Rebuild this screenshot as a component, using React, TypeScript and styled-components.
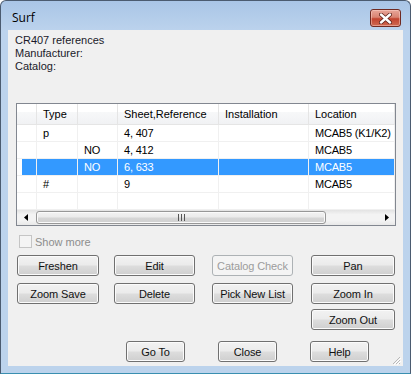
import { FC } from "react";
import styled, { createGlobalStyle } from "styled-components";

const Global = createGlobalStyle`
  html, body {
    margin: 0;
    padding: 0;
    background: #ffffff;
  }
  body {
    font-family: "Liberation Sans", Arial, sans-serif;
    font-size: 11px;
  }
`;

const Window = styled.div`
  box-sizing: border-box;
  width: 411px;
  height: 374px;
  border: 1px solid #4b5b70;
  border-bottom-color: #3a8fb0;
  border-radius: 6px 6px 0 0;
  background: linear-gradient(to bottom, #a9c5e6 0px, #bcd3ed 30px, #bcd3ec 100%);
  padding: 0 7px 7px 7px;
  display: flex;
  flex-direction: column;
`;

const TitleBar = styled.div`
  height: 29px;
  display: flex;
  align-items: flex-start;
  justify-content: space-between;
  padding: 0 2px 0 4px;
`;

const Title = styled.span`
  font-family: "Open Sans", "Noto Sans", sans-serif;
  font-size: 12px;
  color: #000;
  margin-top: 8px;
`;

const CloseBtn = styled.div`
  box-sizing: border-box;
  width: 31px;
  height: 18px;
  margin-top: 8px;
  border: 1px solid #6f2a22;
  border-radius: 3px;
  background: linear-gradient(to bottom, #e8a699 0%, #d98473 45%, #c2432f 55%, #cf6a52 100%);
  box-shadow: inset 0 0 0 1px rgba(255, 220, 210, 0.45);
  display: flex;
  align-items: center;
  justify-content: center;
`;

const Client = styled.div`
  flex: 1;
  position: relative;
  background: #f0f0f0;
  display: flex;
  flex-direction: column;
`;

const Info = styled.div`
  padding: 4px 0 0 7px;
  line-height: 13px;
  color: #1a1a2a;
  height: 69px;
`;

const ListView = styled.div`
  box-sizing: border-box;
  margin-left: 8px;
  width: 380px;
  height: 123px;
  border: 1px solid #828790;
  background: #fff;
  display: flex;
  flex-direction: column;
  overflow: hidden;
`;

const COLS = "20px 41px 40px 101px 90px 86px";

const HeaderRow = styled.div`
  display: grid;
  grid-template-columns: ${COLS};
  height: 23px;
  background: linear-gradient(to bottom, #ffffff 0%, #ffffff 40%, #f7f8f9 41%, #f1f2f4 100%);
  border-bottom: 1px solid #e5e5e5;
`;

const HeaderCell = styled.div`
  border-right: 1px solid #e5e5e5;
  padding-left: 6px;
  display: flex;
  align-items: center;
  color: #000;
  white-space: nowrap;
  overflow: hidden;
`;

const Rows = styled.div`
  flex: 1;
  display: flex;
  flex-direction: column;
`;

const Row = styled.div`
  display: grid;
  grid-template-columns: ${COLS};
  height: 17px;
  flex-shrink: 0;
`;

const Cell = styled.div<{ $sel?: boolean; $first?: boolean }>`
  border-right: 1px solid #f0f0f0;
  border-bottom: 1px solid #f0f0f0;
  padding-left: 6px;
  display: flex;
  align-items: center;
  white-space: nowrap;
  overflow: hidden;
  letter-spacing: -0.2px;
  color: ${(p) => (p.$sel ? "#fff" : "#000")};
  background: ${(p) =>
    p.$sel
      ? p.$first
        ? "linear-gradient(to right, #fff 5px, #3399ff 5px)"
        : "#3399ff"
      : "transparent"};
`;

const ScrollBar = styled.div`
  height: 17px;
  display: flex;
  align-items: stretch;
  background: linear-gradient(to bottom, #e3e3e3, #f3f3f3 30%, #f3f3f3 70%, #e8e8e8);
`;

const ArrowBox = styled.div`
  width: 17px;
  display: flex;
  align-items: center;
  justify-content: center;
`;

const Thumb = styled.div`
  box-sizing: border-box;
  width: 290px;
  margin: 1px 0 1px 2px;
  border: 1px solid #979797;
  border-radius: 3px;
  background: linear-gradient(to bottom, #f2f2f2 0%, #ebebeb 45%, #d6d6d6 55%, #d0d0d0 100%);
  box-shadow: inset 0 0 0 1px #fafafa;
  display: flex;
  align-items: center;
  justify-content: center;
`;

const Track = styled.div`
  flex: 1;
`;

const CheckRow = styled.div`
  display: flex;
  align-items: center;
  gap: 3px;
  margin: 9px 0 0 11px;
  height: 13px;
  color: #8d8d8d;
`;

const CheckBox = styled.div`
  box-sizing: border-box;
  width: 13px;
  height: 13px;
  border: 1px solid #c5c5c5;
  background: #f4f4f4;
`;

const ButtonRow = styled.div<{ $top: number }>`
  display: grid;
  grid-template-columns: 97px 98px 99px 83px;
  margin: ${(p) => p.$top}px 0 0 9px;
`;

const Button = styled.div<{ $w: number; $disabled?: boolean }>`
  box-sizing: border-box;
  width: ${(p) => p.$w}px;
  height: 21px;
  border: 1px solid ${(p) => (p.$disabled ? "#adb2b5" : "#707070")};
  border-radius: 3px;
  background: ${(p) =>
    p.$disabled
      ? "#f4f4f4"
      : "linear-gradient(to bottom, #f2f2f2 0%, #ebebeb 48%, #dddddd 52%, #cfcfcf 100%)"};
  box-shadow: inset 0 0 0 1px ${(p) => (p.$disabled ? "#f4f4f4" : "#fbfbfb")};
  color: ${(p) => (p.$disabled ? "#9c9c9c" : "#111")};
  letter-spacing: -0.1px;
  display: flex;
  align-items: center;
  justify-content: center;
  white-space: nowrap;
`;

const BottomRow = styled.div`
  display: flex;
  gap: 33px;
  margin: 11px 0 0 118px;
`;

const Grip = styled.svg`
  position: absolute;
  right: 2px;
  bottom: 1px;
`;

type R = { cells: string[]; sel?: boolean };

const rows: R[] = [
  { cells: ["", "p", "", "4, 407", "", "MCAB5 (K1/K2)"] },
  { cells: ["", "", "NO", "4, 412", "", "MCAB5"] },
  { cells: ["", "", "NO", "6, 633", "", "MCAB5"], sel: true },
  { cells: ["", "#", "", "9", "", "MCAB5"] },
  { cells: ["", "", "", "", "", ""] },
];

const headers = ["", "Type", "", "Sheet,Reference", "Installation", "Location"];

const App: FC = () => {
  return (
    <>
      <Global />
      <Window>
        <TitleBar>
          <Title>Surf</Title>
          <CloseBtn>
            <svg width="13" height="11" viewBox="0 0 13 11">
              <path
                d="M2 1.5 L11 9.5 M11 1.5 L2 9.5"
                stroke="#5a2018"
                strokeWidth="4"
                strokeLinecap="round"
              />
              <path
                d="M2 1.5 L11 9.5 M11 1.5 L2 9.5"
                stroke="#fff"
                strokeWidth="2.4"
                strokeLinecap="round"
              />
            </svg>
          </CloseBtn>
        </TitleBar>
        <Client>
          <Info>
            <div>CR407 references</div>
            <div>Manufacturer:</div>
            <div>Catalog:</div>
          </Info>
          <ListView>
            <HeaderRow>
              {headers.map((h, i) => (
                <HeaderCell key={i}>{h}</HeaderCell>
              ))}
            </HeaderRow>
            <Rows>
              {rows.map((r, i) => (
                <Row key={i}>
                  {r.cells.map((c, j) => (
                    <Cell key={j} $sel={r.sel} $first={j === 0}>
                      {c}
                    </Cell>
                  ))}
                </Row>
              ))}
            </Rows>
            <ScrollBar>
              <ArrowBox>
                <svg width="4" height="7" viewBox="0 0 4 7">
                  <path d="M4 0 L0 3.5 L4 7 Z" fill="#000" />
                </svg>
              </ArrowBox>
              <Thumb>
                <svg width="7" height="7" viewBox="0 0 7 7">
                  <path d="M0.5 0 V7 M3.5 0 V7 M6.5 0 V7" stroke="#555" strokeWidth="1" />
                </svg>
              </Thumb>
              <Track />
              <ArrowBox>
                <svg width="4" height="7" viewBox="0 0 4 7">
                  <path d="M0 0 L4 3.5 L0 7 Z" fill="#000" />
                </svg>
              </ArrowBox>
            </ScrollBar>
          </ListView>
          <CheckRow>
            <CheckBox />
            <span>Show more</span>
          </CheckRow>
          <ButtonRow $top={7}>
            <Button $w={82}>Freshen</Button>
            <Button $w={81}>Edit</Button>
            <Button $w={81} $disabled>
              Catalog Check
            </Button>
            <Button $w={84}>Pan</Button>
          </ButtonRow>
          <ButtonRow $top={7}>
            <Button $w={82}>Zoom Save</Button>
            <Button $w={81}>Delete</Button>
            <Button $w={81}>Pick New List</Button>
            <Button $w={84}>Zoom In</Button>
          </ButtonRow>
          <ButtonRow $top={5}>
            <span />
            <span />
            <span />
            <Button $w={84}>Zoom Out</Button>
          </ButtonRow>
          <BottomRow>
            <Button $w={59}>Go To</Button>
            <Button $w={59}>Close</Button>
            <Button $w={59}>Help</Button>
          </BottomRow>
          <Grip width="10" height="10" viewBox="0 0 10 10">
            <path
              d="M9 2 L2 9 M9 5 L5 9 M9 8 L8 9"
              stroke="#b8b8b8"
              strokeWidth="1"
            />
            <path
              d="M10 3 L3 10 M10 6 L6 10"
              stroke="#ffffff"
              strokeWidth="1"
            />
          </Grip>
        </Client>
      </Window>
    </>
  );
};

export default App;
